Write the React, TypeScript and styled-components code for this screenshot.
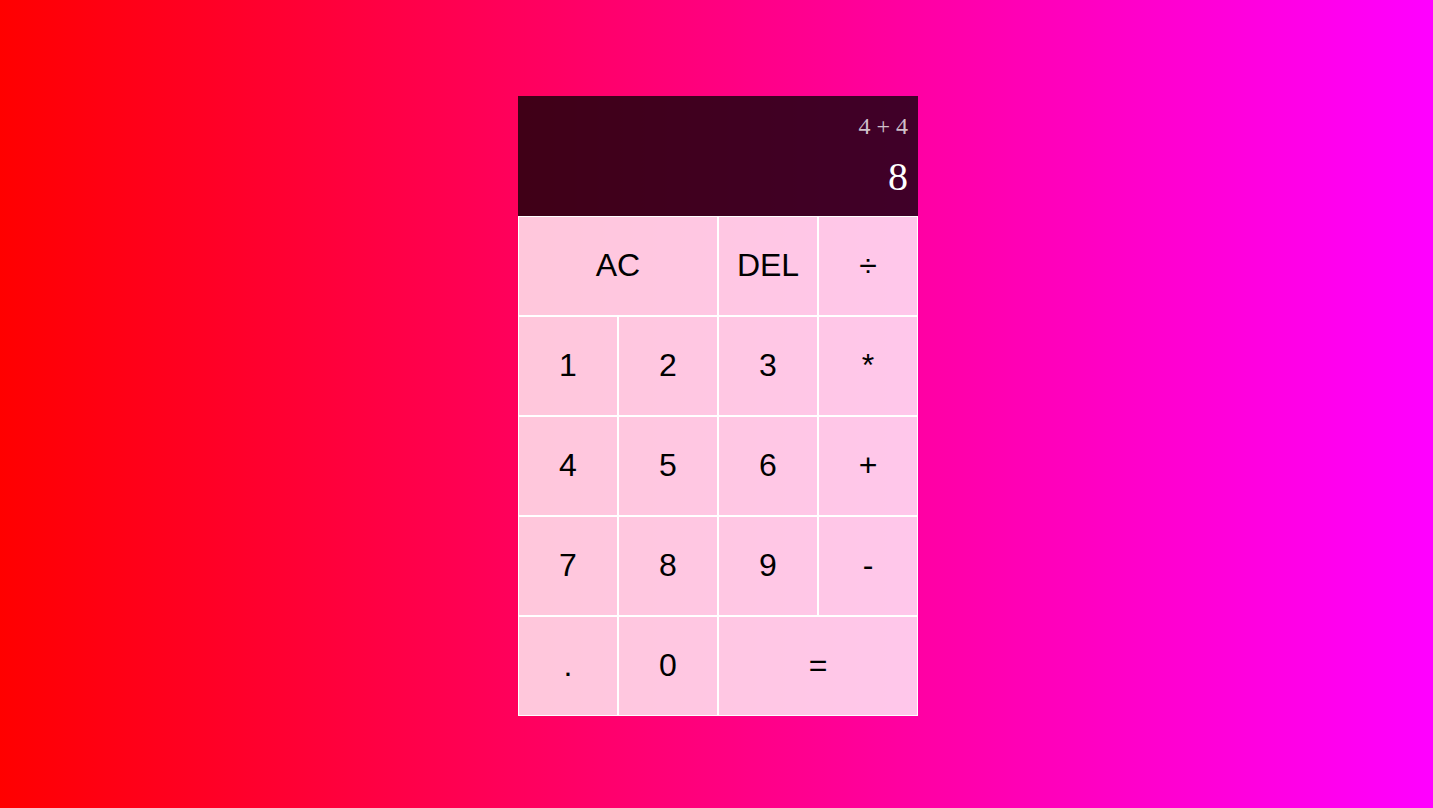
import React from "react";
import styled, { createGlobalStyle } from "styled-components";

const serifStack = `"Liberation Serif", "Times New Roman", Tinos, "Noto Serif", "DejaVu Serif", FreeSerif, Georgia, Times, serif`;

const GlobalStyle = createGlobalStyle`
  *, *::before, *::after { box-sizing: border-box; }
  html, body { margin: 0; padding: 0; }
  body {
    background: linear-gradient(to right, #ff0000, #ff00ff);
    min-height: 100vh;
    font-family: ${serifStack};
  }
`;

const CalculatorGrid = styled.div`
  display: grid;
  justify-content: center;
  align-content: center;
  min-height: 100vh;
  padding: 4px 0 0 3px;
  grid-template-columns: repeat(4, 100px);
  grid-template-rows: minmax(120px, auto) repeat(5, 100px);
`;

const Output = styled.div`
  grid-column: 1 / -1;
  background-color: rgba(0, 0, 0, 0.75);
  display: flex;
  flex-direction: column;
  align-items: flex-end;
  justify-content: space-around;
  padding: 10px;
  word-wrap: break-word;
  word-break: break-all;
  font-family: ${serifStack};
`;

const PreviousOperand = styled.div`
  color: rgba(255, 255, 255, 0.75);
  font-size: 24px;
`;

const CurrentOperand = styled.div`
  color: white;
  font-size: 40px;
`;

const Key = styled.button<{ $span?: number }>`
  grid-column: ${(p) => (p.$span ? `span ${p.$span}` : "auto")};
  cursor: pointer;
  font-family: "Liberation Sans", Arial, sans-serif;
  font-size: 32px;
  color: black;
  border: 1px solid white;
  outline: none;
  background-color: rgba(255, 255, 255, 0.78);
  padding: 0 0 2px 0;
  margin: 0;
`;

const keys: { label: string; span?: number }[] = [
  { label: "AC", span: 2 },
  { label: "DEL" },
  { label: "÷" },
  { label: "1" },
  { label: "2" },
  { label: "3" },
  { label: "*" },
  { label: "4" },
  { label: "5" },
  { label: "6" },
  { label: "+" },
  { label: "7" },
  { label: "8" },
  { label: "9" },
  { label: "-" },
  { label: "." },
  { label: "0" },
  { label: "=", span: 2 },
];

export default function App() {
  return (
    <>
      <GlobalStyle />
      <CalculatorGrid>
        <Output>
          <PreviousOperand>4 + 4</PreviousOperand>
          <CurrentOperand>8</CurrentOperand>
        </Output>
        {keys.map((k) => (
          <Key key={k.label} $span={k.span}>
            {k.label}
          </Key>
        ))}
      </CalculatorGrid>
    </>
  );
}
